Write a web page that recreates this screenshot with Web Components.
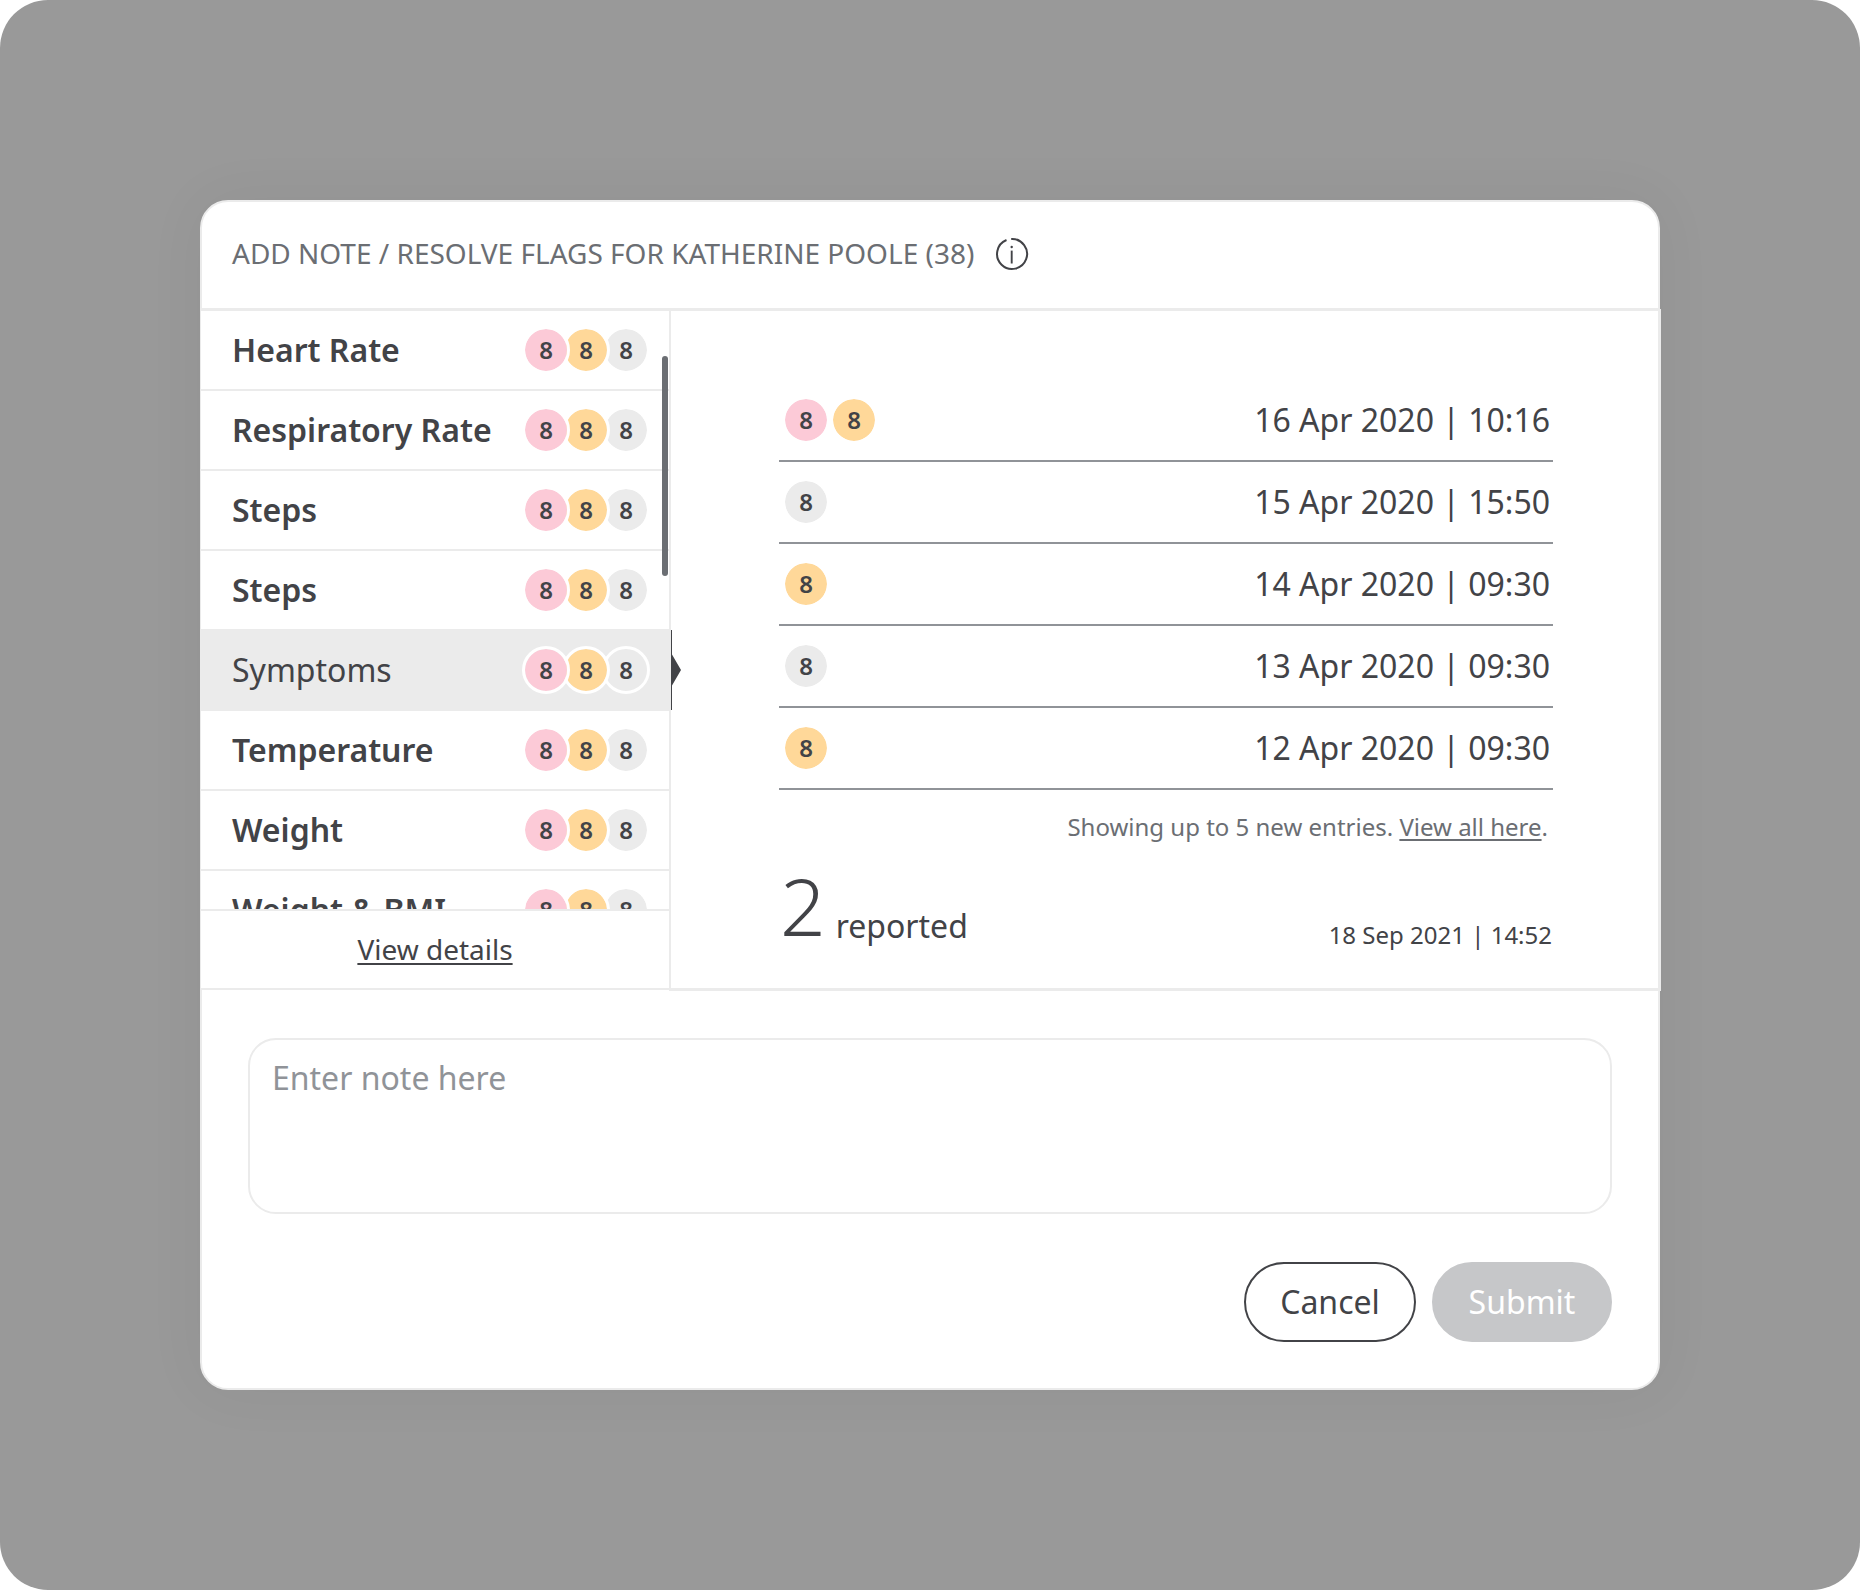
<!DOCTYPE html>
<html lang="en"><head><meta charset="utf-8"><title>Resolve flags</title>
<style>
html{background:#fff}
body{margin:0;font-family:"Noto Sans",sans-serif;color:#424347}
</style></head><body>
<note-dialog></note-dialog>
<script>
const define=(name,css,html)=>customElements.define(name,class extends HTMLElement{
  constructor(){super();this.attachShadow({mode:'open'}).innerHTML=`<style>*{box-sizing:border-box}${css}</style>${html}`;}
});

define('count-badge',`
:host{display:flex;align-items:center;justify-content:center;width:48px;height:48px;box-sizing:border-box;flex:none;border:3px solid #fff;border-radius:50%;background:#ebebeb;background-clip:padding-box;font-size:24px;font-weight:600;line-height:32px}
:host([tone=red]){background-color:#fccad7}
:host([tone=amber]){background-color:#ffd899}
`,`<slot></slot>`);

define('metric-row',`
:host{display:flex;box-sizing:border-box;height:80px;flex:none;align-items:center;justify-content:space-between;padding:0 19px 0 31px;border-bottom:2px solid #ebebeb;font-size:32px;font-weight:600;line-height:44px}
:host([selected]){background:#ebebeb;font-weight:400}
.flags{display:flex;isolation:isolate}
.flags count-badge{margin-left:-8px;position:relative}
.r{z-index:3}.a{z-index:2}.g{z-index:1}
`,`<slot></slot><div class="flags"><count-badge class="r" tone="red">8</count-badge><count-badge class="a" tone="amber">8</count-badge><count-badge class="g">8</count-badge></div>`);

define('entry-row',`
:host{display:flex;box-sizing:border-box;height:82px;align-items:center;justify-content:space-between;padding:0 3px;border-bottom:2px solid #909398;font-size:32px;line-height:44px}
.flags{display:flex}
`,`<div class="flags"><slot name="flag"></slot></div><slot></slot>`);

define('pill-button',`
:host{display:flex;box-sizing:border-box;height:80px;align-items:center;justify-content:center;border:2px solid #424347;border-radius:40px;font-size:32px;line-height:44px;width:172px}
:host([disabled]){width:180px;background:#c6c7c9;border-color:#c6c7c9;color:#fff}
`,`<slot></slot>`);

define('metric-list',`
:host{display:flex;flex-direction:column;width:468px;height:681px;flex:none;position:relative;box-sizing:border-box;background:#fff;border:solid #ebebeb;border-width:2px 0}
.rows{height:598px;overflow:hidden;display:flex;flex-direction:column}
.foot{height:79px;border-top:2px solid #ebebeb;display:flex;align-items:center;justify-content:center;padding-bottom:2px;font-size:28px;line-height:38px;text-decoration:underline;text-decoration-thickness:1.5px;text-underline-offset:3px}
.thumb{position:absolute;right:1px;top:45px;width:6px;height:220px;border-radius:3px;background:#6b6e73}
.pointer{position:absolute;left:468px;top:318px;width:12px;height:82px}
`,`<div class="rows"><slot></slot></div><div class="foot"><span>View details</span></div><div class="thumb"></div>
<svg class="pointer" viewBox="0 0 12 82"><path d="M0 0H2V82H0Z" fill="#ebebeb"/><path d="M2 1H3V25.500L12 41L3 56.500V81H2Z" fill="#424347"/></svg>`);

define('note-dialog',`
:host{display:flex;align-items:center;justify-content:center;width:1860px;height:1590px;border-radius:48px;background:#999}
.card{width:1460px;height:1190px;background:#fff;border:2px solid #ebebeb;border-radius:28px;box-shadow:0 0 60px rgba(0,0,0,.05);display:flex;flex-direction:column}
header{height:108px;flex:none;padding:0 0 4px 30px;display:flex;align-items:center;gap:21px;font-size:28px;line-height:38px;color:#6b6e73;border-bottom:2px solid #ebebeb}
header svg{margin-top:2px;flex:none}
.mid{display:flex;height:682px;flex:none;margin:-1px -3px 0 -1px}
metric-list{z-index:1}
.detail{flex:1;border:2px solid #ebebeb;padding:69px 106px 0 108px}
.more{font-size:24px;line-height:33px;color:#6b6e73;text-align:right;margin:20px 5px 0 0}
.sum{display:flex;align-items:flex-start;margin-top:22px;padding:0 1px}
.n{font-size:80px;font-weight:300;line-height:80px}
.rep{font-size:32px;line-height:44px;margin:39px 0 0 10px}
.time{font-size:24px;line-height:33px;margin:53px 0 0 auto}
u{text-decoration-thickness:1.5px;text-underline-offset:3px}
.compose{flex:1;margin-top:-3px;border-top:2px solid #ebebeb;padding:48px 46px 0}
.note{height:176px;border:2px solid #ebebeb;border-radius:28px;padding:16px 22px;font-size:32px;line-height:44px;color:#909398}
.actions{display:flex;justify-content:flex-end;gap:16px;margin-top:48px}
`,`<section class="card"><header><span>ADD NOTE / RESOLVE FLAGS FOR KATHERINE POOLE (38)</span>
<svg width="34" height="34" viewBox="0 0 34 34" fill="none" stroke="#424347" stroke-width="2"><path d="M11.500 3.050A15 15 0 1 0 16.200 2"/><path d="M16.700 13.600V26.500" stroke-width="1.900"/><circle cx="16.700" cy="10" r="1.200" fill="#424347" stroke="none"/></svg></header>
<div class="mid"><metric-list>
<metric-row>Heart Rate</metric-row><metric-row>Respiratory Rate</metric-row><metric-row>Steps</metric-row><metric-row>Steps</metric-row><metric-row selected>Symptoms</metric-row><metric-row>Temperature</metric-row><metric-row>Weight</metric-row><metric-row>Weight &amp; BMI</metric-row>
</metric-list><div class="detail">
<entry-row><count-badge slot="flag" tone="red">8</count-badge><count-badge slot="flag" tone="amber">8</count-badge>16 Apr 2020 | 10:16</entry-row>
<entry-row><count-badge slot="flag">8</count-badge>15 Apr 2020 | 15:50</entry-row>
<entry-row><count-badge slot="flag" tone="amber">8</count-badge>14 Apr 2020 | 09:30</entry-row>
<entry-row><count-badge slot="flag">8</count-badge>13 Apr 2020 | 09:30</entry-row>
<entry-row><count-badge slot="flag" tone="amber">8</count-badge>12 Apr 2020 | 09:30</entry-row>
<div class="more">Showing up to 5 new entries. <u>View all here</u>.</div>
<div class="sum"><span class="n">2</span><span class="rep">reported</span><span class="time">18 Sep 2021 | 14:52</span></div>
</div></div>
<div class="compose"><div class="note">Enter note here</div>
<div class="actions"><pill-button>Cancel</pill-button><pill-button disabled>Submit</pill-button></div></div>
</section>`);
</script></body></html>
